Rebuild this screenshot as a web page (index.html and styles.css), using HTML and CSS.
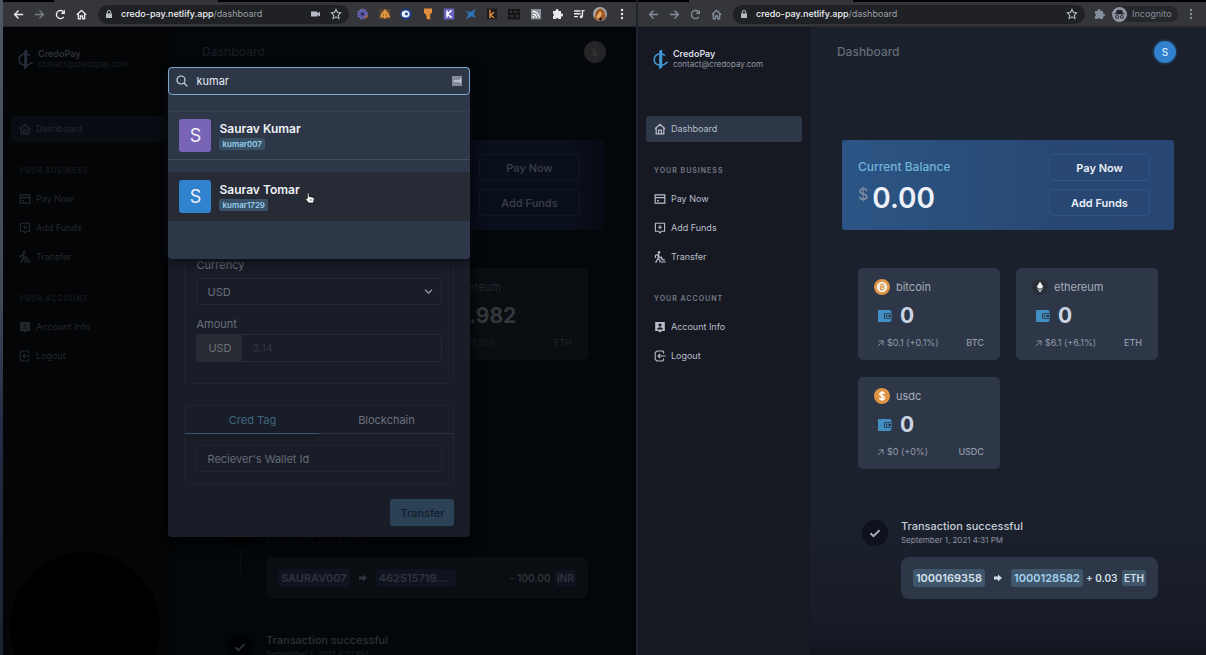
FILE: index.html
```html
<!DOCTYPE html>
<html lang="en">
<head>
<meta charset="utf-8">
<title>CredoPay Dashboard</title>
<link rel="stylesheet" href="styles.css">
</head>
<body>
<svg class="sprite" aria-hidden="true">
  <symbol id="back" viewBox="0 0 14 14"><path d="M12 7H3M7 2.8 2.8 7 7 11.2" fill="none" stroke="currentColor" stroke-width="1.5"/></symbol>
  <symbol id="forward" viewBox="0 0 14 14"><path d="M2 7h9M7 2.8 11.2 7 7 11.2" fill="none" stroke="currentColor" stroke-width="1.5"/></symbol>
  <symbol id="reload" viewBox="0 0 14 14"><path d="M10.6 9.6A4.4 4.4 0 1 1 10 3.8" fill="none" stroke="currentColor" stroke-width="1.5"/><path d="M11.8 1.8v4.6H7.2z" fill="currentColor"/></symbol>
  <symbol id="home" viewBox="0 0 14 14"><path d="M2 7.2 7 2.6l5 4.6M3.6 6.4v5.2h2.2V8.6h2.4v3h2.2V6.4" fill="none" stroke="currentColor" stroke-width="1.4"/></symbol>
  <symbol id="lock" viewBox="0 0 10 10"><path d="M2 4.4h6V9H2z" fill="currentColor"/><path d="M3.4 4.6V3a1.6 1.6 0 0 1 3.2 0v1.6" fill="none" stroke="currentColor"/></symbol>
  <symbol id="star" viewBox="0 0 14 14"><path d="m7 2.4 1.4 3 3.3.4-2.4 2.3.6 3.3L7 9.8l-2.9 1.6.6-3.3-2.4-2.3 3.3-.4z" fill="none" stroke="currentColor" stroke-width="1.1"/></symbol>
  <symbol id="video" viewBox="0 0 14 14"><path d="M3 4.5h6.4v1.8L12 4.8v4.6L9.4 8v1.6H3z" fill="currentColor"/></symbol>
  <symbol id="puzzle" viewBox="0 0 14 14"><path d="M3 4h2.6a1.5 1.5 0 1 1 2.9 0H11v2.6a1.5 1.5 0 1 1 0 2.8V12H8.400a1.400 1.400 0 0 0-2.700 0H3V9.300a1.400 1.400 0 0 0 0-2.600z" fill="currentColor"/></symbol>
  <symbol id="kebab" viewBox="0 0 14 14"><g fill="currentColor"><circle cx="7" cy="3" r="1.2"/><circle cx="7" cy="7" r="1.2"/><circle cx="7" cy="11" r="1.2"/></g></symbol>
  <symbol id="logo" viewBox="0 0 16 20"><path d="M6.2 1.2 9.2 0v18l-3 2z" fill="currentColor"/><path d="M12 6.2C8 2.4 1.2 5 1.2 10.2c0 5.6 8 7.8 13.6 2" fill="none" stroke="currentColor" stroke-width="1.5"/></symbol>
  <symbol id="house" viewBox="0 0 12 12"><path d="M1 5.8 6 1.2l5 4.6M2.2 5v5.8h7.6V5M4.6 10.6V7.2h2.8v3.4" fill="none" stroke="currentColor" stroke-width="1.2"/></symbol>
  <symbol id="card" viewBox="0 0 12 12"><path d="M1.2 1.8h9.6v8.4H1.2zM1 4.7h10M3 7.6h2" fill="none" stroke="currentColor" stroke-width="1.2"/></symbol>
  <symbol id="plus" viewBox="0 0 12 12"><path d="M1.4 1.2h9.2v8H7.4L6 10.8 4.6 9.2H1.4zM6 3.2v4M4 5.2h4" fill="none" stroke="currentColor" stroke-width="1.1"/></symbol>
  <symbol id="walk" viewBox="0 0 12 12"><circle cx="5" cy="1.4" r="1.3" fill="currentColor"/><path d="M1.4 7V4.4l3-1 1 2.8 2 .8M4.4 3.6 4 7.4l2 1.6v2.6M4 7.4 1.6 11.6M7 5.4l1.6 3.4h2.2M7 11h4.8" fill="none" stroke="currentColor" stroke-width="1.2"/></symbol>
  <symbol id="account" viewBox="0 0 12 12"><path d="M1.2 1h9.6v9H8L6 11.4 4 10H1.2z" fill="currentColor"/><circle cx="6" cy="4" r="1.6" fill="#161922"/><path d="M3 8.6c.4-3 5.6-3 6 0z" fill="#161922"/></symbol>
  <symbol id="logout" viewBox="0 0 12 12"><path d="M9.6 3.4V1.8L8.6 1H3L1.2 2.6v6.8L3 11h5.6l1-1V8.4M4 6h7.6M6.2 3.8 4 6l2.2 2.2" fill="none" stroke="currentColor" stroke-width="1.1"/></symbol>
  <symbol id="wallet" viewBox="0 0 14 12"><path d="M0 0h12l1.4 1v2H7.2A1.4 1.4 0 0 0 6 4.4v3.2A1.4 1.4 0 0 0 7.2 9h6.2v2L12 12H0z" fill="currentColor"/><path d="M7.6 4.2H14v3.6H7.6z" fill="none" stroke="currentColor" stroke-width="1.1"/><path d="M9 5.3h1.6v1.5H9z" fill="currentColor"/></symbol>
  <symbol id="rise" viewBox="0 0 8 8"><path d="M1 7 7 1M1.8 1H7v5.2" fill="none" stroke="currentColor"/></symbol>
  <symbol id="check" viewBox="0 0 12 12"><path d="m1.5 6.2 3 3 6-6" fill="none" stroke="currentColor" stroke-width="2"/></symbol>
  <symbol id="to" viewBox="0 0 8 8"><path d="M0 2.600h4V.4L8 4 4 7.600V5.400H0z" fill="currentColor"/></symbol>
</svg>

<div class="desktop">
  <div class="wallpaper"></div>

  <section class="window dim" aria-label="First window">
    <div class="tabstrip"><span class="tab"></span></div>
    <div class="toolbar">
      <nav class="controls">
        <button class="tool" aria-label="Back"><svg><use href="#back"/></svg></button>
        <button class="tool off" aria-label="Forward"><svg><use href="#forward"/></svg></button>
        <button class="tool" aria-label="Reload"><svg><use href="#reload"/></svg></button>
        <button class="tool" aria-label="Home"><svg><use href="#home"/></svg></button>
      </nav>
      <div class="address">
        <svg class="lock"><use href="#lock"/></svg>
        <span class="url"><b>credo-pay.netlify.app</b>/dashboard</span>
        <svg class="mini"><use href="#video"/></svg>
        <svg class="mini"><use href="#star"/></svg>
      </div>
      <div class="extensions">
        <svg viewBox="0 0 14 14"><circle cx="6.5" cy="7" r="4.4" fill="#5b57a6" stroke="#6f70b8" stroke-width="2" stroke-dasharray="1.5 1"/><circle cx="6.5" cy="7" r="1.6" fill="#252a4a"/><path d="m9 11 2.5-2.5" stroke="#a96a3c" stroke-width="2"/></svg>
        <svg viewBox="0 0 14 14"><path d="M1.5 2h11v10h-11z" fill="#5d4630"/><path d="m2 11 1-4 4-5 4 5 1 4-3-1-2 2-2-2z" fill="#e0953f"/><path d="M5 8h1m2 0h1" stroke="#4b331f"/></svg>
        <svg viewBox="0 0 14 14"><circle cx="7" cy="7" r="5.6" fill="#1c3f8c"/><ellipse cx="6.6" cy="7" rx="4" ry="3.6" fill="#e8effa"/><circle cx="7.4" cy="7" r="1.4" fill="#17367c"/></svg>
        <svg viewBox="0 0 14 14"><path d="M3 1.6h8V6L9.2 7v5.6H6L5 7.4 3 6z" fill="#df8f3e"/><path d="M5 12.5h5" stroke="#6e3f24"/></svg>
        <svg viewBox="0 0 14 14"><path d="M1.8 1.5h10.4v11H1.8z" fill="#6a60bd"/><path d="M5 3.4v7.2M9.6 3.4 5.4 7l4.2 3.6" fill="none" stroke="#fff" stroke-width="1.6"/></svg>
        <svg viewBox="0 0 14 14"><path d="m2 12 2.600-4.400L2 3.600l4.400 1.600L12 1.800 9.600 6.800l2 4-4-1.600z" fill="#2f76c2"/></svg>
        <svg viewBox="0 0 14 14"><path d="M2 1.6h10v10.8H2z" fill="#1c1b1b"/><path d="M5 2.8v8.4M9 5 5.6 8.2 9.2 11" fill="none" stroke="#d8873a" stroke-width="1.5"/></svg>
        <svg viewBox="0 0 14 14"><path d="M1 2h12v10.4H1z" fill="#151515"/><path d="M2.5 5h3m2 0h4m-9 4h4m2 0h3M4 3v3m4-3v3M5 8v3m5-3v3" stroke="#3a3a3a"/></svg>
        <svg viewBox="0 0 14 14"><path d="M2 2h10v10.4H2z" fill="#8b909a"/><path d="M3.6 7A3.6 3.6 0 0 1 7.4 10.8M3.6 4.3A6.4 6.4 0 0 1 10.2 10.8" fill="none" stroke="#fff" stroke-width="1.2"/><circle cx="4.4" cy="10" r="1" fill="#fff"/></svg>
        <svg class="bright"><use href="#puzzle"/></svg>
        <svg viewBox="0 0 14 14"><path d="M2 4h6.5M2 6.8h6.5M2 9.6h4M12.6 3.6h-2.2v6" fill="none" stroke="#e8eaed" stroke-width="1.4"/><circle cx="9.2" cy="9.8" r="1.5" fill="#e8eaed"/></svg>
        <svg viewBox="0 0 14 14"><circle cx="7" cy="7" r="7" fill="#a5aebb"/><path d="M1.5 11.5C2 5 4 1 8 1.5c4 .8 4.6 6 4.5 9.5L7 14z" fill="#a05a24"/><path d="m3 10 4-6 2 3-3 5z" fill="#e2a767"/><circle cx="7.6" cy="12" r="1.5" fill="#221510"/></svg>
        <svg class="bright"><use href="#kebab"/></svg>
      </div>
    </div>

    <div class="app">
      <aside class="sidebar">
        <div class="brand">
          <svg class="logo"><use href="#logo"/></svg>
          <div><strong>CredoPay</strong><small>contact@credopay.com</small></div>
        </div>
        <nav>
          <a class="item current" href="#dashboard"><svg><use href="#house"/></svg>Dashboard</a>
          <h2>YOUR BUSINESS</h2>
          <a class="item" href="#pay"><svg><use href="#card"/></svg>Pay Now</a>
          <a class="item" href="#funds"><svg><use href="#plus"/></svg>Add Funds</a>
          <a class="item" href="#transfer"><svg><use href="#walk"/></svg>Transfer</a>
          <h2>YOUR ACCOUNT</h2>
          <a class="item" href="#account-info"><svg><use href="#account"/></svg>Account Info</a>
          <a class="item" href="#exit"><svg><use href="#logout"/></svg>Logout</a>
        </nav>
      </aside>
      <main class="main">
        <header class="head"><h1>Dashboard</h1><span class="avatar">k</span></header>
        <section class="balance">
          <div></div>
          <div class="actions"><button>Pay Now</button><button>Add Funds</button></div>
        </section>
        <section class="wallets">
          <article class="wallet second">
            <h3><svg class="coin" viewBox="0 0 16 16"><path d="m8 2 3.5 6L8 14 4.5 8z" fill="currentColor"/></svg>ethereum</h3>
            <p class="held"><svg><use href="#wallet"/></svg>0.982</p>
            <p class="rate"><svg><use href="#rise"/></svg><span>$6.1 (+6.1%)</span><abbr>ETH</abbr></p>
          </article>
        </section>
        <ol class="history">
          <li>
            <div class="mark"><span><svg><use href="#check"/></svg></span></div>
            <div class="entry">
              <h3>Transaction successful</h3><time>September 1, 2021 4:31 PM</time>
              <div class="receipt"><span class="tag">SAURAV007</span><svg><use href="#to"/></svg><span class="tag long">462515719...</span><span class="sum">- 100.00 <em>INR</em></span></div>
            </div>
          </li>
          <li>
            <div class="mark"><span><svg><use href="#check"/></svg></span></div>
            <div class="entry"><h3>Transaction successful</h3><time>September 1, 2021 4:31 PM</time></div>
          </li>
        </ol>
      </main>
    </div>

    <div class="bubble"></div>

    <div class="overlay">
      <form class="transfer">
        <div class="group money">
          <label for="currency">Currency</label>
          <div class="select"><select id="currency"><option>USD</option></select><svg viewBox="0 0 8 8"><path d="m1 2.5 3 3 3-3" fill="none" stroke="currentColor" stroke-width="1.3"/></svg></div>
          <label for="amount">Amount</label>
          <div class="addon"><span>USD</span><input id="amount" placeholder="3.14"></div>
        </div>
        <div class="group">
          <div class="tabs" role="tablist"><button type="button" role="tab" aria-selected="true">Cred Tag</button><button type="button" role="tab" aria-selected="false">Blockchain</button></div>
          <div class="receiver"><input aria-label="Reciever's Wallet Id" placeholder="Reciever's Wallet Id"></div>
        </div>
        <button class="submit" type="button">Transfer</button>
      </form>
      <div class="search">
        <label class="query">
          <svg viewBox="0 0 12 12"><circle cx="5" cy="5" r="4" fill="none" stroke="currentColor" stroke-width="1.2"/><path d="m8 8 3.4 3.4" stroke="currentColor" stroke-width="1.2"/></svg>
          <input type="text" aria-label="Search users" value="kumar">
          <svg class="fill" viewBox="0 0 10 10"><path d="M0 0h10v10H0z" fill="#858b98"/><path d="M1.5 5h6M8.3 3v4" stroke="#e9ecf2"/></svg>
        </label>
        <ul class="results">
          <li><span class="face violet">S</span><div><strong>Saurav Kumar</strong><span class="handle">kumar007</span></div></li>
          <li class="hover"><span class="face blue">S</span><div><strong>Saurav Tomar</strong><span class="handle">kumar1729</span></div>
            <svg class="hand" viewBox="0 0 10 12"><path d="M2.3 1.4q1-1.2 1.7 0V4.500l4 .7q1.500.4 1.200 2.400L8.400 11H3.600L.6 7.200q.2-1.300 1.700-.4z" fill="#fff" stroke="#111" stroke-width=".8"/><path d="M5.200 7v2M6.900 7v2" stroke="#555" stroke-width=".7"/></svg></li>
        </ul>
      </div>
    </div>
  </section>

  <section class="window lit" aria-label="Second window">
    <div class="tabstrip"><span class="tab"></span></div>
    <div class="toolbar">
      <nav class="controls">
        <button class="tool" aria-label="Back"><svg><use href="#back"/></svg></button>
        <button class="tool" aria-label="Forward"><svg><use href="#forward"/></svg></button>
        <button class="tool" aria-label="Reload"><svg><use href="#reload"/></svg></button>
        <button class="tool" aria-label="Home"><svg><use href="#home"/></svg></button>
      </nav>
      <div class="address">
        <svg class="lock"><use href="#lock"/></svg>
        <span class="url"><b>credo-pay.netlify.app</b>/dashboard</span>
        <svg class="mini"><use href="#star"/></svg>
      </div>
      <div class="private">
        <svg><use href="#puzzle"/></svg>
        <span class="incognito"><svg viewBox="0 0 16 16"><circle cx="8" cy="8" r="8" fill="#9097a5"/><path d="m4.5 7 1-3.5h5l1 3.5zM2.5 7.2h11" stroke="#23252b" fill="#23252b"/><circle cx="5.5" cy="10.6" r="1.6" fill="none" stroke="#23252b"/><circle cx="10.5" cy="10.6" r="1.6" fill="none" stroke="#23252b"/></svg>Incognito</span>
        <svg><use href="#kebab"/></svg>
      </div>
    </div>

    <div class="app">
      <aside class="sidebar">
        <div class="brand">
          <svg class="logo"><use href="#logo"/></svg>
          <div><strong>CredoPay</strong><small>contact@credopay.com</small></div>
        </div>
        <nav>
          <a class="item current" href="#dashboard"><svg><use href="#house"/></svg>Dashboard</a>
          <h2>YOUR BUSINESS</h2>
          <a class="item" href="#pay"><svg><use href="#card"/></svg>Pay Now</a>
          <a class="item" href="#funds"><svg><use href="#plus"/></svg>Add Funds</a>
          <a class="item" href="#transfer"><svg><use href="#walk"/></svg>Transfer</a>
          <h2>YOUR ACCOUNT</h2>
          <a class="item" href="#account-info"><svg><use href="#account"/></svg>Account Info</a>
          <a class="item" href="#exit"><svg><use href="#logout"/></svg>Logout</a>
        </nav>
      </aside>
      <main class="main">
        <header class="head"><h1>Dashboard</h1><span class="avatar">S</span></header>
        <section class="balance">
          <div><h2>Current Balance</h2><p class="total"><sup>$</sup>0.00</p></div>
          <div class="actions"><button>Pay Now</button><button>Add Funds</button></div>
        </section>
        <section class="wallets">
          <article class="wallet">
            <h3><svg class="coin" viewBox="0 0 16 16"><circle cx="8" cy="8" r="8" fill="#dd9445"/><circle cx="8" cy="8" r="5.3" fill="#f3ead9"/><path d="M6.6 5.3h2q1.5.2 1.3 1.3T8.3 7.9q1.7 0 1.5 1.4T8 10.6H6m1.2-5-.8 5M7 7.9h1.5" fill="none" stroke="#d58b3d"/></svg>bitcoin</h3>
            <p class="held"><svg><use href="#wallet"/></svg>0</p>
            <p class="rate"><svg><use href="#rise"/></svg><span>$0.1 (+0.1%)</span><abbr>BTC</abbr></p>
          </article>
          <article class="wallet">
            <h3><svg class="coin" viewBox="0 0 16 16"><circle cx="8" cy="8" r="8" fill="#2a2e37"/><path d="m8 2.5 3.3 5.5L8 10 4.7 8z" fill="#eef1f6"/><path d="M4.7 9 8 11l3.3-2L8 13.6z" fill="#c5cad4"/></svg>ethereum</h3>
            <p class="held"><svg><use href="#wallet"/></svg>0</p>
            <p class="rate"><svg><use href="#rise"/></svg><span>$6.1 (+6.1%)</span><abbr>ETH</abbr></p>
          </article>
          <article class="wallet">
            <h3><svg class="coin" viewBox="0 0 16 16"><circle cx="8" cy="8" r="8" fill="#dd9445"/><path d="M10.5 5.8C10 4 5.8 4 5.8 6.2S10.5 7.6 10.5 9.8 6 12 5.5 10M8 3v10" fill="none" stroke="#fff" stroke-width="1.4"/></svg>usdc</h3>
            <p class="held"><svg><use href="#wallet"/></svg>0</p>
            <p class="rate"><svg><use href="#rise"/></svg><span>$0 (+0%)</span><abbr>USDC</abbr></p>
          </article>
        </section>
        <ol class="history">
          <li>
            <div class="mark"><span><svg><use href="#check"/></svg></span></div>
            <div class="entry">
              <h3>Transaction successful</h3><time>September 1, 2021 4:31 PM</time>
              <div class="receipt"><span class="tag">1000169358</span><svg><use href="#to"/></svg><span class="tag to">1000128582</span><span class="sum">+ 0.03 <em>ETH</em></span></div>
            </div>
          </li>
        </ol>
      </main>
    </div>
  </section>
</div>
</body>
</html>
```

FILE: styles.css
```css
* { box-sizing: border-box; }
body, h1, h2, h3, p, ul, ol { margin: 0; padding: 0; }
body { background: #000; font: 400 9px/12px Inter, "Liberation Sans", sans-serif; }
ul, ol { list-style: none; }
button, input, select { font: inherit; color: inherit; background: none; border: 0; padding: 0; margin: 0; outline: 0; }
a { color: inherit; text-decoration: none; }
svg { flex: none; display: block; }
.sprite { position: absolute; width: 0; height: 0; }

.desktop { display: flex; height: 100vh; overflow: hidden; }
.wallpaper { flex: none; width: 3px; background: linear-gradient(#4e5864, #414b59 45%, #222c45 65%, #1d2230); }
.window { position: relative; min-width: 0; display: flex; flex-direction: column; overflow: hidden; }
.window.dim { flex: 634; border-right: 2px solid #20232d; }
.window.lit { flex: 569; }

/* theme values */
.dim {
  --side: #030506; --main: #04070a; --brand: #303238; --mail: #1d2026; --logo: #262e3b;
  --item: #25282e; --active: #090c12; --label: #181b22; --title: #171b22;
  --panel: #0a0d12; --name: #24272d; --num: #34363a; --rate: #1d2025; --walleticon: #132330;
  --face: #252527; --facetext: #3a3a3c; --button: #3c404a; --line: #131826;
  --done: #2c2f36; --date: #1b1e24; --disc: #010203; --tick: #272c38; --tag: #0f1320; --tagtext: #30333a;
}
.lit {
  --side: #161922; --main: #1a202c; --brand: #d7dbe3; --mail: #9298a4; --logo: #4299d6;
  --item: #b8bec9; --active: #2d3748; --label: #747b88; --title: #666c78;
  --panel: #2d3748; --name: #a5adba; --num: #cbd4e1; --rate: #929aa8; --walleticon: #438fc4;
  --face: #3182ce; --facetext: #dcecf8; --button: #e9eef6; --line: #2f5488;
  --done: #c8ced9; --date: #8d93a0; --disc: #0e121d; --tick: #a7acb9; --tag: #40566b; --tagtext: #d4e0ea;
}

/* browser chrome */
.tabstrip { flex: none; height: 2px; background: #000; }
.tab { display: block; width: 164px; height: 2px; margin-left: 51px; background: #353639; }
.toolbar { flex: none; height: 25px; display: flex; align-items: center; background: #353639; border-bottom: 1px solid #28292c; color: #e8eaed; }
.lit .toolbar { color: #858c9b; }
.controls { display: flex; padding: 0 6px 0 5px; }
.tool { width: 21px; height: 20px; display: grid; place-items: center; }
.tool svg { width: 13px; height: 13px; }
.off { color: #777b82; }
.address { flex: 1; min-width: 0; height: 19px; display: flex; align-items: center; gap: 7px; padding: 0 6px; border-radius: 10px; background: #202124; color: #b8bcc4; }
.lock { width: 10px; height: 10px; }
.lit .lock, .lit .mini { color: #b4bac6; }
.url { flex: 1; color: #9a9fa8; }
.url b { font-weight: 500; color: #eef1f5; }
.mini { width: 14px; height: 14px; }
.extensions { flex: 0 0 287px; display: flex; justify-content: space-between; padding: 0 7px; }
.extensions svg { width: 14px; height: 14px; }
.bright { color: #e8eaed; }
.private { flex: none; display: flex; align-items: center; gap: 6px; padding: 0 8px 0 7px; }
.private > svg { width: 14px; height: 14px; }
.incognito { width: 66px; height: 16px; display: flex; align-items: center; gap: 5px; border-radius: 8px; background: #26272b; }
.incognito svg { width: 15px; height: 15px; }

/* application */
.app { flex: 1; min-height: 0; display: flex; background: var(--main); }
.sidebar { flex: none; width: 172px; padding: 21px 8px 0; background: var(--side); }
.brand { display: flex; align-items: center; gap: 4px; padding-left: 7px; margin-bottom: 46px; }
.logo { width: 16px; height: 21px; color: var(--logo); }
.brand strong { display: block; font-weight: 600; color: var(--brand); line-height: 11px; }
.brand small { display: block; font-size: 8px; line-height: 11px; color: var(--mail); }
.item { display: flex; align-items: center; gap: 5px; height: 26px; padding: 0 8px; margin-bottom: 3px; border-radius: 3px; color: var(--item); }
.item svg { width: 12px; height: 12px; }
.current { background: var(--active); }
.sidebar h2 { margin: 24px 8px 10px; font-size: 7px; line-height: 10px; font-weight: 600; letter-spacing: 1px; color: var(--label); }
.lit .main { background: linear-gradient(#1a202c 80%, #171b26 96%, #11141d); }
.main { flex: 1; min-width: 0; padding-top: 12px; }
.head { display: flex; justify-content: space-between; align-items: center; height: 25px; padding: 0 30px 0 27px; }
.head h1 { font-size: 12px; font-weight: 500; color: var(--title); }
.avatar { width: 22px; height: 22px; display: grid; place-items: center; border-radius: 50%; background: var(--face); color: var(--facetext); font-size: 10px; font-weight: 500; }
.lit .avatar { box-shadow: 0 0 0 2px #1d3045; }

.balance { display: flex; justify-content: space-between; height: 90px; margin: 76px 32px 0; padding: 14px 24px 0 16px; border-radius: 3px; }
.lit .balance { background: linear-gradient(90deg, #2c5585, #284873 65%, #284674); }
.dim .balance { background: linear-gradient(90deg, #0a0f1c 92%, #070a12); }
.balance h2 { padding-top: 5px; font-size: 12px; line-height: 16px; font-weight: 500; color: #72b4d9; }
.total { display: flex; gap: 4px; margin-top: 6px; font-size: 28px; line-height: 34px; font-weight: 600; color: #edf1f7; }
.total sup { font-size: 16px; line-height: 26px; font-weight: 400; color: #8390a3; }
.actions { display: flex; flex-direction: column; gap: 8px; }
.actions button { width: 101px; height: 27px; border: 1px solid var(--line); border-radius: 4px; color: var(--button); font-size: 11px; font-weight: 600; }
.dim .actions button { font-weight: 500; }

.wallets { display: grid; grid-template-columns: 1fr 1fr; grid-template-rows: 92px 92px; gap: 17px 16px; margin: 38px 48px 0; }
.wallet { padding: 11px 16px 0; border-radius: 5px; background: var(--panel); }
.second { grid-column: 2; }
.wallet h3 { display: flex; align-items: center; gap: 6px; font-size: 11px; line-height: 16px; font-weight: 400; color: var(--name); }
.coin { width: 16px; height: 16px; }
.held { display: flex; align-items: center; gap: 8px; height: 26px; margin-top: 8px; padding-left: 4px; font-size: 21px; font-weight: 700; color: var(--num); }
.held svg { width: 14px; height: 12px; color: var(--walleticon); }
.rate { display: flex; align-items: center; gap: 3px; margin-top: 8px; padding-left: 3px; color: var(--rate); }
.rate svg { width: 7px; height: 7px; }
.rate abbr { margin-left: auto; font-weight: 500; }

.history { margin: 50px 48px 0; padding-left: 4px; }
.history li { display: flex; gap: 13px; margin-bottom: 34px; }
.mark span { width: 26px; height: 26px; margin-top: 1px; display: grid; place-items: center; border-radius: 50%; background: var(--disc); color: var(--tick); }
.mark svg { width: 12px; height: 12px; }
.dim .mark::after { content: ""; display: block; width: 1px; height: 18px; margin: 9px auto 0; background: #0e1117; }
.dim li:last-child .mark::after { display: none; }
.entry { flex: 1; min-width: 0; }
.entry h3 { font-size: 11px; line-height: 15px; font-weight: 500; color: var(--done); }
.entry time { display: block; font-size: 8px; color: var(--date); }
.receipt { display: flex; align-items: center; height: 42px; margin-top: 11px; padding: 0 12px; border-radius: 8px; background: var(--panel); color: var(--tagtext); font-size: 11px; font-weight: 600; white-space: nowrap; }
.receipt svg { width: 8px; height: 8px; margin: 0 9px; }
.tag { padding: 2px 3px; border-radius: 3px; background: var(--tag); line-height: 14px; }
.to { color: #a3d3ef; }
.long { width: 80px; }
.sum { margin-left: auto; font-size: 10px; }
.sum em { font-style: normal; margin-left: 2px; padding: 2px; border-radius: 2px; background: var(--tag); font-size: 10px; }
.bubble { position: absolute; left: 7px; bottom: -47px; width: 150px; height: 150px; border-radius: 50%; background: #000; }

/* dialogs */
.overlay { position: absolute; inset: 67px 0 auto; display: grid; grid-template-columns: 302px; justify-content: center; align-items: start; }
.overlay > * { grid-area: 1 / 1; }
.transfer { display: flex; flex-direction: column; padding: 169px 16px 11px; border-radius: 4px; background: #191d28; color: #6b707b; font-size: 11px; box-shadow: 0 6px 14px #000; }
.group { border: 1px solid #1f242e; border-radius: 3px; margin-bottom: 21px; }
.money { padding: 20px 11px 21px; }
.money label { display: block; line-height: 16px; }
.select { position: relative; margin: 5px 0 11px; }
.select select { width: 100%; height: 27px; padding: 0 10px; appearance: none; border: 1px solid #232934; border-radius: 3px; }
.select svg { position: absolute; right: 9px; top: 9px; width: 9px; height: 9px; color: #8c93a0; }
.addon { display: flex; height: 28px; margin-top: 2px; border: 1px solid #252a36; border-radius: 3px; overflow: hidden; }
.addon span { width: 45px; display: grid; place-items: center; background: #282b34; }
.addon input { flex: 1; min-width: 0; padding: 0 10px; }
.addon input::placeholder { color: #303540; }
.tabs { display: grid; grid-template-columns: 1fr 1fr; height: 28px; }
.tabs button { border-bottom: 1px solid #2a303c; }
.tabs button:first-child { color: #3f6680; border-color: #315b73; }
.receiver { padding: 11px; }
.receiver input { width: 100%; height: 27px; padding: 0 10px; border: 1px solid #1f242e; border-radius: 3px; }
.receiver input::placeholder { color: #656b77; }
.group + .submit { margin-top: -6px; }
.submit { align-self: flex-end; width: 64px; height: 27px; border-radius: 3px; background: #2b4155; color: #141e2b; font-weight: 500; }

.search { position: relative; height: 192px; border-radius: 4px; background: #2d3748; box-shadow: 0 3px 8px #0b0e15; }
.query { display: flex; align-items: center; gap: 8px; height: 28px; padding: 0 7px; border: 1px solid #7da9cf; border-radius: 4px; color: #d5dbe5; font-size: 11px; }
.query > svg { width: 12px; height: 12px; }
.query input { flex: 1; min-width: 0; color: #e8edf4; }
.query .fill { width: 10px; height: 10px; }
.results { padding-top: 16px; }
.results li { position: relative; display: flex; align-items: center; gap: 8px; height: 49px; padding: 0 11px; margin-bottom: 12px; border-top: 1px dotted #3a4456; border-bottom: 1px solid #434d5d; }
.results .hover { background: #272b36; border-color: #272b36; }
.face { width: 32px; height: 33px; display: grid; place-items: center; border-radius: 3px; color: #f0f2f8; font-size: 18px; }
.violet { background: #7865b7; }
.blue { background: #3182ce; }
.results strong { display: block; font-size: 12px; line-height: 16px; font-weight: 600; color: #edf1f7; }
.handle { display: inline-block; margin-top: 1px; padding: 0 3px; border-radius: 2px; background: #3a5267; color: #97cdec; font-size: 8px; line-height: 12px; font-weight: 600; }
.hand { position: absolute; left: 137px; top: 19px; width: 10px; height: 12px; }
```
